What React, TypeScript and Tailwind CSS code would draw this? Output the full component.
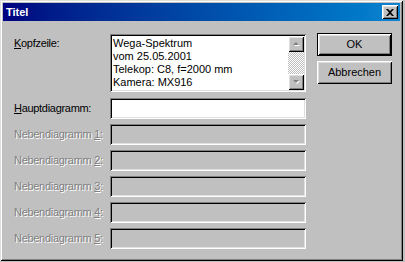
const raised =
  "shadow-[inset_1px_1px_0_#ffffff,inset_-1px_-1px_0_#000000,inset_2px_2px_0_#dfdfdf,inset_-2px_-2px_0_#808080]";
const sunken =
  "shadow-[inset_1px_1px_0_#808080,inset_-1px_-1px_0_#ffffff,inset_2px_2px_0_#000000,inset_-2px_-2px_0_#dfdfdf]";

const lines = [
  "Wega-Spektrum",
  "vom 25.05.2001",
  "Telekop: C8, f=2000 mm",
  "Kamera: MX916",
];

const ArrowButton = ({ up }: { up: boolean }) => (
  <div className={`w-4 h-4 bg-[#c0c0c0] flex items-center justify-center ${raised}`}>
    <svg width="9" height="6" viewBox="0 0 9 6">
      {up ? (
        <>
          <polygon points="2,5 5,2 8,5" fill="#ffffff" />
          <polygon points="1,4 4,1 7,4" fill="#808080" />
        </>
      ) : (
        <>
          <polygon points="2,2 8,2 5,5" fill="#ffffff" />
          <polygon points="1,1 7,1 4,4" fill="#808080" />
        </>
      )}
    </svg>
  </div>
);

const Label = ({
  before,
  accel,
  after,
  disabled,
}: {
  before: string;
  accel: string;
  after: string;
  disabled?: boolean;
}) => (
  <span
    className={
      "tracking-[-0.3px] " +
      (disabled
        ? "text-[#808080] [text-shadow:1px_1px_0_#ffffff]"
        : "text-black")
    }
  >
    {before}
    <span className="underline underline-offset-[1px]">{accel}</span>
    {after}
  </span>
);

export default function App() {
  return (
    <div className="w-[405px] h-[262px] bg-[#c0c0c0] font-['Liberation_Sans',Arial,sans-serif] text-[11px] leading-[13px] select-none">
      <div className="w-[403px] h-[261px] p-[3px] bg-[#c0c0c0] flex flex-col shadow-[inset_1px_1px_0_#dfdfdf,inset_-1px_-1px_0_#000000,inset_2px_2px_0_#ffffff,inset_-2px_-2px_0_#808080]">
        {/* title bar */}
        <div className="h-[18px] shrink-0 flex items-center justify-between pl-[3px] pr-[2px] bg-gradient-to-r from-[#000080] to-[#1084d0]">
          <span className="text-white font-bold text-[11px]">Titel</span>
          <div className={`w-4 h-[14px] bg-[#c0c0c0] flex items-center justify-center ${raised}`}>
            <svg width="8" height="7" viewBox="0 0 8 7">
              <path d="M0,0 L2,0 L4,2 L6,0 L8,0 L5,3.5 L8,7 L6,7 L4,5 L2,7 L0,7 L3,3.5 Z" fill="#000000" />
            </svg>
          </div>
        </div>

        <div className="flex pl-[11px] pt-[12px]">
          {/* fields */}
          <div className="flex flex-col pt-[1px]">
            <div className="flex">
              <div className="w-[96px] pt-[3px]">
                <Label before="" accel="K" after="opfzeile:" />
              </div>
              <div className={`w-[196px] h-[58px] bg-white p-[2px] flex ${sunken}`}>
                <div className="flex-1 pl-[1px] pt-[1px] text-black">
                  {lines.map((l) => (
                    <div key={l}>{l}</div>
                  ))}
                </div>
                <div className="w-4 flex flex-col">
                  <ArrowButton up />
                  <div className="flex-1 bg-[repeating-conic-gradient(#c0c0c0_0%_25%,#ffffff_0%_50%)] bg-size-[2px_2px] bg-[length:2px_2px]" />
                  <ArrowButton up={false} />
                </div>
              </div>
            </div>

            <div className="flex items-center mt-[6px]">
              <div className="w-[96px]">
                <Label before="" accel="H" after="auptdiagramm:" />
              </div>
              <div className={`w-[196px] h-[21px] bg-white ${sunken}`} />
            </div>

            {[1, 2, 3, 4, 5].map((n) => (
              <div key={n} className="flex items-center mt-[5px]">
                <div className="w-[96px]">
                  <Label before="Nebendiagramm " accel={String(n)} after=":" disabled />
                </div>
                <div className={`w-[196px] h-[21px] bg-[#c0c0c0] ${sunken}`} />
              </div>
            ))}
          </div>

          {/* buttons */}
          <div className="flex flex-col gap-[5px] ml-[11px]">
            <div className="w-[75px] h-[23px] bg-black p-[1px]">
              <div className={`w-full h-full bg-[#c0c0c0] flex items-center justify-center text-black ${raised}`}>
                OK
              </div>
            </div>
            <div className={`w-[75px] h-[23px] bg-[#c0c0c0] flex items-center justify-center text-black ${raised}`}>
              Abbrechen
            </div>
          </div>
        </div>
      </div>
    </div>
  );
}
